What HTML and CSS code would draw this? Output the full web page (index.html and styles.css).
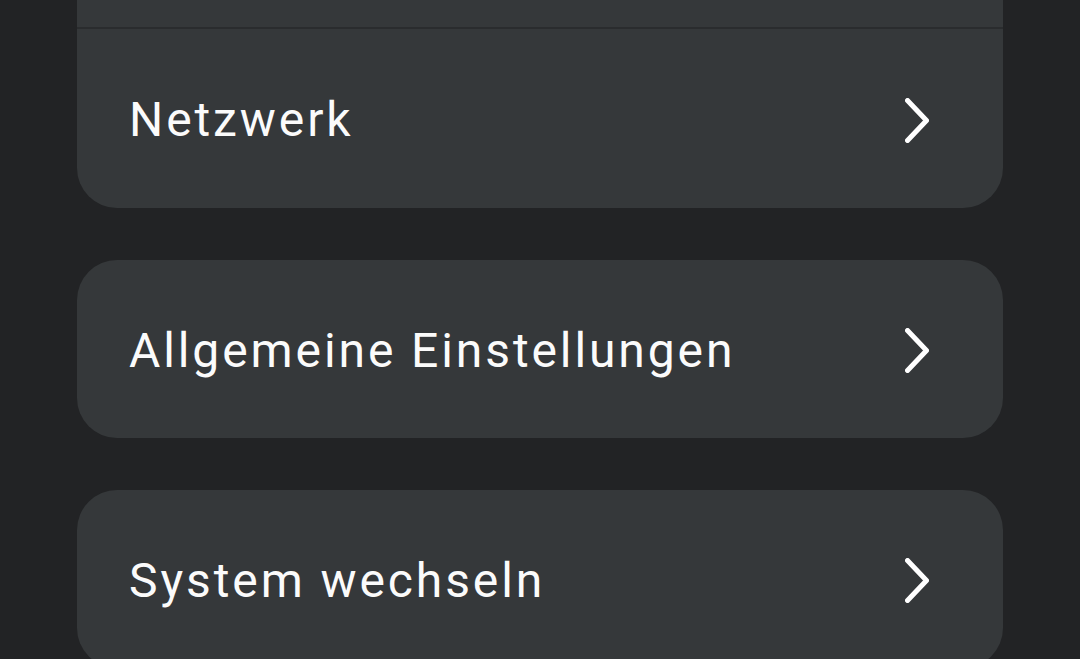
FILE: index.html
```html
<!DOCTYPE html>
<html lang="de">
<head>
<meta charset="utf-8">
<link rel="stylesheet" href="styles.css">
</head>
<body>
<main class="list">
  <section class="card card-first">
    <div class="row row-hidden"></div>
    <div class="divider"></div>
    <div class="row">
      <span class="label">Netzwerk</span>
      <svg class="chev" width="24" height="45" viewBox="0 0 24 45"><polyline points="2.5,2.5 21.5,22.5 2.5,42.5" fill="none" stroke="#fff" stroke-width="5" stroke-linecap="round" stroke-linejoin="round"/></svg>
    </div>
  </section>
  <section class="card">
    <div class="row">
      <span class="label">Allgemeine Einstellungen</span>
      <svg class="chev" width="24" height="45" viewBox="0 0 24 45"><polyline points="2.5,2.5 21.5,22.5 2.5,42.5" fill="none" stroke="#fff" stroke-width="5" stroke-linecap="round" stroke-linejoin="round"/></svg>
    </div>
  </section>
  <section class="card">
    <div class="row">
      <span class="label">System wechseln</span>
      <svg class="chev" width="24" height="45" viewBox="0 0 24 45"><polyline points="2.5,2.5 21.5,22.5 2.5,42.5" fill="none" stroke="#fff" stroke-width="5" stroke-linecap="round" stroke-linejoin="round"/></svg>
    </div>
  </section>
</main>
</body>
</html>
```
FILE: styles.css
```css
html, body {
  margin: 0;
  padding: 0;
  background: #222325;
  height: 659px;
  overflow: hidden;
}
body {
  font-family: Roboto, "Noto Sans", sans-serif;
}
.list {
  display: flex;
  flex-direction: column;
  gap: 52px;
  padding: 0 77px;
  margin-top: -151px;
}
.card {
  background: #35383a;
  border-radius: 40px;
  overflow: hidden;
}
.divider {
  height: 2px;
  background: #2a2c2e;
}
.row {
  height: 178px;
  box-sizing: border-box;
  display: flex;
  align-items: center;
  justify-content: space-between;
  padding: 3px 74px 0 52px;
}
.row-hidden {
  height: 178px;
  padding: 0;
}
.card-first .row:last-child {
  height: 179px;
}
.label {
  color: #fbfbfb;
  font-size: 48px;
  letter-spacing: 2.9px;
  line-height: 1;
}
.chev {
  display: block;
}
```
